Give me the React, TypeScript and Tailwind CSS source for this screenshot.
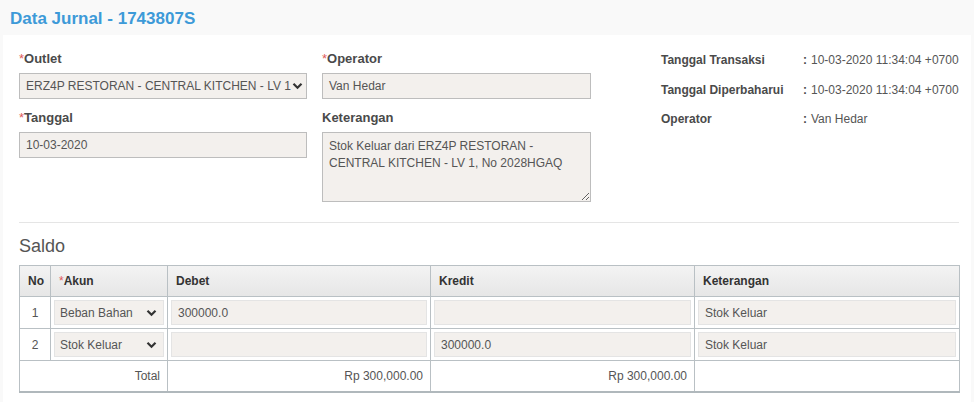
import React from "react";

const font = { fontFamily: '"Liberation Sans", Arial, sans-serif' };

function Chevron() {
  return (
    <svg width="11" height="8" viewBox="0 0 11 8" className="shrink-0">
      <path d="M1.5 1.8 L5.5 5.8 L9.5 1.8" fill="none" stroke="#333" strokeWidth="2.2" />
    </svg>
  );
}

function Req() {
  return <span className="text-[#e05a5a] font-normal">*</span>;
}

function Label({ children }: { children: React.ReactNode }) {
  return <div className="h-[18px] leading-[18px] text-[13px] font-bold text-[#4a4a4a] mb-[5px]">{children}</div>;
}

function InfoRow({ label, value }: { label: string; value: string }) {
  return (
    <div className="flex h-[18px] leading-[18px] text-[12px] whitespace-nowrap">
      <div className="w-[142px] shrink-0 font-bold text-[#4a4a4a]">{label}</div>
      <div className="w-[8px] shrink-0 font-bold text-[#4a4a4a]">:</div>
      <div className="text-[#555]">{value}</div>
    </div>
  );
}

function CellInput({ value }: { value: string }) {
  return (
    <div className="h-[25px] bg-[#f3f0ed] border border-[#e4e4e4] px-[6px] flex items-center text-[12px] text-[#555]">
      {value}
    </div>
  );
}

function CellSelect({ value }: { value: string }) {
  return (
    <div className="h-[25px] bg-[#f3f0ed] border border-[#e4e4e4] pl-[5px] pr-[6px] flex items-center justify-between text-[12px] text-[#555]">
      <span>{value}</span>
      <Chevron />
    </div>
  );
}

export default function App() {
  const th = "border border-[#b9c0c4] text-left pl-[8px] font-bold text-[12px] text-[#333] h-[31px] p-0";
  const td = "border border-[#b9c0c4] p-[3px] align-middle";
  return (
    <div style={font} className="bg-[#f9f9f9] min-h-[402px] w-[974px]">
      <div className="h-[35px] pl-[10px] pt-[10px]">
        <div className="text-[17px] leading-[18px] font-bold text-[#3d9ad8]">Data Jurnal - 1743807S</div>
      </div>
      <div className="bg-white mx-[3px] px-[16px] pt-[15px] pb-[10px] min-h-[367px]">
        <div className="flex">
          <div className="w-[288px] shrink-0">
            <Label>
              <Req />Outlet
            </Label>
            <div className="h-[26px] bg-[#f3f0ed] border border-[#bdbdbd] pl-[6px] pr-[3px] flex items-center justify-between text-[12px] text-[#555] whitespace-nowrap overflow-hidden">
              <span>ERZ4P RESTORAN - CENTRAL KITCHEN - LV 1</span>
              <Chevron />
            </div>
            <div className="mt-[10px]">
              <Label>
                <Req />Tanggal
              </Label>
              <div className="h-[26px] bg-[#f3f0ed] border border-[#bdbdbd] px-[6px] flex items-center text-[12px] text-[#555]">
                10-03-2020
              </div>
            </div>
          </div>
          <div className="w-[269px] shrink-0 ml-[15px]">
            <Label>
              <Req />Operator
            </Label>
            <div className="h-[26px] bg-[#f3f0ed] border border-[#bdbdbd] px-[6px] flex items-center text-[12px] text-[#555]">
              Van Hedar
            </div>
            <div className="mt-[10px]">
              <Label>Keterangan</Label>
              <textarea
                readOnly
                value="Stok Keluar dari ERZ4P RESTORAN - CENTRAL KITCHEN - LV 1, No 2028HGAQ"
                className="block w-[269px] h-[70px] bg-[#f3f0ed] border border-[#bdbdbd] px-[6px] pt-[5px] text-[12px] leading-[17px] text-[#555] outline-none"
                style={font}
              />
            </div>
          </div>
          <div className="ml-[70px] pt-[1px] flex flex-col gap-[11.5px]">
            <InfoRow label="Tanggal Transaksi" value="10-03-2020 11:34:04 +0700" />
            <InfoRow label="Tanggal Diperbaharui" value="10-03-2020 11:34:04 +0700" />
            <InfoRow label="Operator" value="Van Hedar" />
          </div>
        </div>
        <div className="mt-[20px] h-px bg-[#e5e5e5] w-[940px]" />
        <div className="mt-[13px] text-[18px] leading-[20px] text-[#555]">Saldo</div>
        <table className="mt-[9px] w-[940px] table-fixed border-collapse border-b-2 border-b-[#b0b8bc]">
          <colgroup>
            <col className="w-[31px]" />
            <col className="w-[117px]" />
            <col className="w-[263px]" />
            <col className="w-[264px]" />
            <col className="w-[265px]" />
          </colgroup>
          <thead>
            <tr className="bg-gradient-to-b from-[#f3f3f3] to-[#e6e6e6]">
              <th className={th}>No</th>
              <th className={th}>
                <Req />Akun
              </th>
              <th className={th}>Debet</th>
              <th className={th}>Kredit</th>
              <th className={th}>Keterangan</th>
            </tr>
          </thead>
          <tbody>
            <tr>
              <td className={td + " text-center text-[12px] text-[#555]"}>1</td>
              <td className={td}>
                <CellSelect value="Beban Bahan" />
              </td>
              <td className={td}>
                <CellInput value="300000.0" />
              </td>
              <td className={td}>
                <CellInput value="" />
              </td>
              <td className={td}>
                <CellInput value="Stok Keluar" />
              </td>
            </tr>
            <tr>
              <td className={td + " text-center text-[12px] text-[#555]"}>2</td>
              <td className={td}>
                <CellSelect value="Stok Keluar" />
              </td>
              <td className={td}>
                <CellInput value="" />
              </td>
              <td className={td}>
                <CellInput value="300000.0" />
              </td>
              <td className={td}>
                <CellInput value="Stok Keluar" />
              </td>
            </tr>
            <tr className="h-[31px]">
              <td colSpan={2} className="border border-[#b9c0c4] text-right pr-[7px] text-[12px] text-[#555]">
                Total
              </td>
              <td className="border border-[#b9c0c4] text-right pr-[7px] text-[12px] text-[#555]">Rp 300,000.00</td>
              <td className="border border-[#b9c0c4] text-right pr-[7px] text-[12px] text-[#555]">Rp 300,000.00</td>
              <td className="border border-[#b9c0c4]"></td>
            </tr>
          </tbody>
        </table>
      </div>
    </div>
  );
}
